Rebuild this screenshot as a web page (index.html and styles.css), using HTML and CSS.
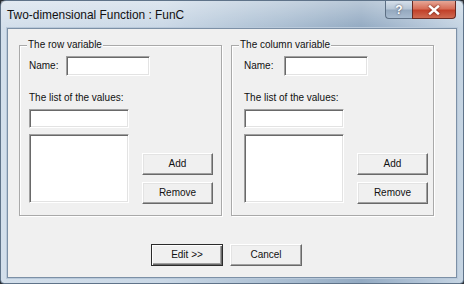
FILE: index.html
```html
<!DOCTYPE html>
<html>
<head>
<meta charset="utf-8">
<link rel="stylesheet" href="styles.css">
</head>
<body>
<div class="window">
  <div class="titlebar">
    <span class="title">Two-dimensional Function : FunC</span>
    <div class="caption-buttons">
      <div class="cap-btn help">?</div>
      <div class="cap-btn close">
        <svg width="12" height="10" viewBox="0 0 12 10"><path d="M2 1.5 L10 8.5 M10 1.5 L2 8.5" stroke="#fff" stroke-width="2.4" stroke-linecap="square"/></svg>
      </div>
    </div>
  </div>
  <div class="client">
    <div class="groups">
      <div class="group group-left">
        <div class="legend">The row variable</div>
        <div class="name-row"><span class="name-label">Name:</span><div class="field name-input"></div></div>
        <div class="list-label">The list of the values:</div>
        <div class="field list-input"></div>
        <div class="list-row">
          <div class="field listbox"></div>
          <div class="btn-col"><div class="btn">Add</div><div class="btn">Remove</div></div>
        </div>
      </div>
      <div class="group group-right">
        <div class="legend">The column variable</div>
        <div class="name-row"><span class="name-label">Name:</span><div class="field name-input"></div></div>
        <div class="list-label">The list of the values:</div>
        <div class="field list-input"></div>
        <div class="list-row">
          <div class="field listbox"></div>
          <div class="btn-col"><div class="btn">Add</div><div class="btn">Remove</div></div>
        </div>
      </div>
    </div>
    <div class="footer">
      <div class="btn btn-wide btn-default">Edit &gt;&gt;</div>
      <div class="btn btn-wide">Cancel</div>
    </div>
  </div>
</div>
</body>
</html>
```

FILE: styles.css
```css
* { box-sizing: border-box; }
html, body { margin: 0; padding: 0; }
body {
  width: 464px;
  height: 284px;
  background: #2a2f35;
  font-family: "Liberation Sans", Arial, sans-serif;
  font-size: 10px;
  color: #111;
  overflow: hidden;
}
.window {
  width: 464px;
  height: 284px;
  border: 1px solid #5f7389;
  border-radius: 6px 6px 4px 4px;
  background: linear-gradient(to right, #d3dfeb 0%, #cad8e6 35%, #a9bdd1 62%, #93aac2 78%, #b3c5d8 92%, #c6d5e3 100%);
  padding: 0 6px 5px 6px;
  display: flex;
  flex-direction: column;
}
.titlebar {
  height: 27px;
  display: flex;
  justify-content: space-between;
  align-items: flex-start;
  background: linear-gradient(to bottom, rgba(255,255,255,0.35), rgba(255,255,255,0));
  margin: 0 -6px;
  padding: 0 7px 0 6px;
}
.title {
  font-size: 11.9px;
  line-height: 14px;
  padding-top: 7px;
  color: #111;
}
.caption-buttons {
  display: flex;
  height: 18px;
}
.cap-btn {
  height: 18px;
  display: flex;
  align-items: center;
  justify-content: center;
  color: #fff;
  font-weight: bold;
  font-size: 12px;
  text-shadow: 0 0 2px #334;
}
.help {
  width: 27px;
  border: 1px solid #5d6f84;
  border-top: none;
  border-right: none;
  border-radius: 0 0 0 4px;
  background: linear-gradient(to bottom, #d5dfea 0%, #b7c6d6 45%, #95a9bf 55%, #a8bbcf 100%);
}
.close {
  width: 44px;
  border: 1px solid #6a2a22;
  border-top: none;
  border-radius: 0 0 4px 0;
  background: linear-gradient(to bottom, #e6a797 0%, #d76e58 45%, #c2412a 55%, #cf6b52 100%);
}
.close svg { filter: drop-shadow(0 0 1px #6a1c10); }
.client {
  height: 250px;
  background: #f0f0f0;
  border: 1px solid #7c90a6;
  box-shadow: 0 0 0 1px #b9c9da;
}
.groups {
  display: flex;
  gap: 9px;
  padding-left: 11px;
  margin-top: 16px;
}
.group {
  width: 203px;
  height: 171px;
  border: 1px solid #a9a9a9;
  box-shadow: inset 1px 1px 0 #fff, 1px 1px 0 #fff;
  display: flex;
  flex-direction: column;
  align-items: flex-start;
}
.group-left { padding-left: 9px; }
.group-right { padding-left: 12px; }
.legend {
  margin-top: -7px;
  margin-left: -2px;
  padding: 0 1px;
  line-height: 12px;
  background: #f0f0f0;
}
.group-right .legend { margin-left: -5px; }
.name-row {
  display: flex;
  align-items: center;
  margin-top: 5px;
  height: 20px;
}
.name-label { width: 37px; line-height: 20px; }
.group-right .name-label { width: 40px; }
.list-label {
  margin-top: 16px;
  line-height: 12px;
}
.field {
  background: #fff;
  border-top: 1px solid #a0a0a0;
  border-left: 1px solid #a0a0a0;
  border-right: 1px solid #fff;
  border-bottom: 1px solid #fff;
  box-shadow: inset 1px 1px 0 #696969, inset -1px -1px 0 #e3e3e3;
}
.name-input { width: 84px; height: 20px; }
.list-input { width: 100px; height: 19px; margin-top: 5px; }
.list-row {
  display: flex;
  margin-top: 6px;
}
.listbox { width: 100px; height: 69px; }
.btn-col {
  display: flex;
  flex-direction: column;
  gap: 7px;
  padding-top: 19px;
  margin-left: 13px;
}
.btn {
  width: 71px;
  height: 22px;
  display: flex;
  align-items: center;
  justify-content: center;
  background: #f0f0f0;
  border-top: 1px solid #fff;
  border-left: 1px solid #fff;
  border-right: 1px solid #696969;
  border-bottom: 1px solid #696969;
  box-shadow: inset -1px -1px 0 #a0a0a0, inset 1px 1px 0 #e3e3e3;
  line-height: 12px;
}
.footer {
  display: flex;
  gap: 7px;
  margin-top: 28px;
  padding-left: 143px;
}
.btn-wide { width: 72px; }
.btn-default {
  border: 1px solid #2b2b2b;
  box-shadow: inset 1px 1px 0 #fff, inset -1px -1px 0 #696969, inset -2px -2px 0 #a0a0a0;
}
```
